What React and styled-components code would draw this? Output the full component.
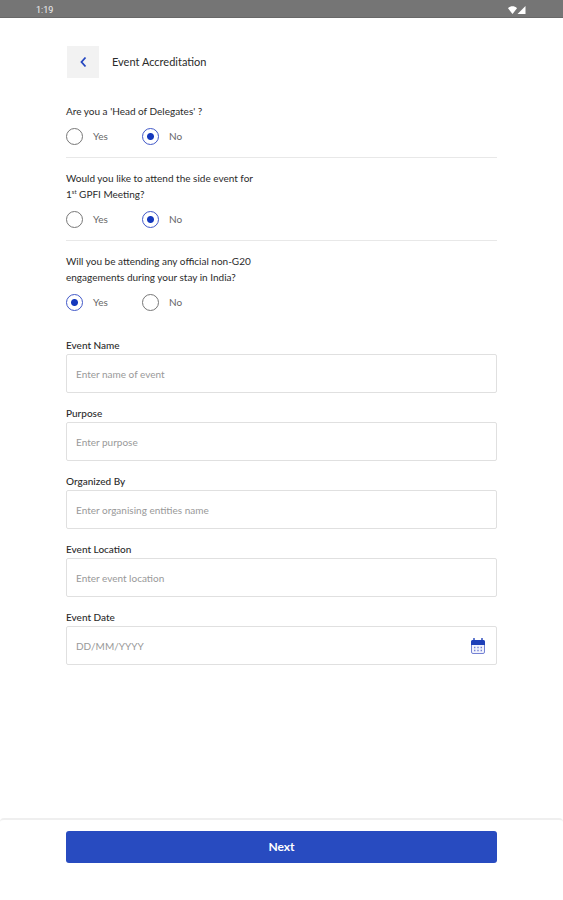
import { useState } from "react";
import styled, { createGlobalStyle } from "styled-components";

const questions = [
  { id: "head", text: "Are you a 'Head of Delegates' ?", answer: "No" },
  {
    id: "side",
    text: (
      <>
        Would you like to attend the side event for 1<sup>st</sup> GPFI Meeting?
      </>
    ),
    answer: "No",
  },
  {
    id: "official",
    text: "Will you be attending any official non-G20 engagements during your stay in India?",
    answer: "Yes",
  },
];

const fields = [
  { id: "name", label: "Event Name", placeholder: "Enter name of event" },
  { id: "purpose", label: "Purpose", placeholder: "Enter purpose" },
  { id: "organizer", label: "Organized By", placeholder: "Enter organising entities name" },
  { id: "location", label: "Event Location", placeholder: "Enter event location" },
  { id: "date", label: "Event Date", placeholder: "DD/MM/YYYY", calendar: true },
];

function StatusIcons() {
  return (
    <svg width="18" height="8" viewBox="0 0 18 8" fill="#fff" aria-hidden="true">
      <path d="M0 2.2C2.6-.4 6.4-.4 9 2.2L4.5 8Z" />
      <path d="M17.5 0V8H9.5Z" />
    </svg>
  );
}

function CalendarIcon() {
  return (
    <svg width="14" height="16" viewBox="0 0 14 16" aria-hidden="true">
      <rect x="0.5" y="2.5" width="13" height="13" rx="1.5" fill="#f1f2fc" stroke="#7482d4" />
      <path d="M0 7V3.5Q0 2 1.5 2h11Q14 2 14 3.5V7Z" fill="#1d3fb8" />
      <path d="M3 0.5v3M11 0.5v3" stroke="#1d3fb8" strokeWidth="1.4" strokeLinecap="round" />
      <path
        d="M3 9.5h1.4M6.3 9.5h1.4M9.6 9.5h1.4M3 12.5h1.4M6.3 12.5h1.4M9.6 12.5h1.4"
        stroke="#7482d4"
        strokeWidth="1.4"
      />
    </svg>
  );
}

function Question({ id, text, answer }) {
  const [value, setValue] = useState(answer);
  return (
    <QuestionBox>
      <QuestionText>{text}</QuestionText>
      <Options>
        {["Yes", "No"].map((option) => (
          <Option key={option}>
            <Radio
              type="radio"
              name={id}
              checked={value === option}
              onChange={() => setValue(option)}
            />
            {option}
          </Option>
        ))}
      </Options>
    </QuestionBox>
  );
}

function App() {
  return (
    <>
      <GlobalStyle />
      <Page>
        <StatusBar>
          <span>1:19</span>
          <StatusIcons />
        </StatusBar>
        <Content>
          <Header>
            <BackButton type="button" aria-label="Back">
              <svg width="8" height="12" viewBox="0 0 8 12" fill="none" aria-hidden="true">
                <path d="M6.5 1.5 2.5 6l4 4.5" stroke="#2446c0" strokeWidth="1.8" />
              </svg>
            </BackButton>
            <Title>Event Accreditation</Title>
          </Header>
          {questions.map((question) => (
            <Question key={question.id} {...question} />
          ))}
          <Fields>
            {fields.map((field) => (
              <Field key={field.id}>
                <Label htmlFor={field.id}>{field.label}</Label>
                <InputBox>
                  <Input id={field.id} type="text" placeholder={field.placeholder} />
                  {field.calendar && (
                    <IconButton type="button" aria-label="Choose date">
                      <CalendarIcon />
                    </IconButton>
                  )}
                </InputBox>
              </Field>
            ))}
          </Fields>
        </Content>
        <Footer>
          <NextButton type="button">Next</NextButton>
        </Footer>
      </Page>
    </>
  );
}
export default App;

const GlobalStyle = createGlobalStyle`
  * {
    box-sizing: border-box;
  }

  body {
    margin: 0;
    background: #fff;
    color: #2b2b2b;
    font-family: Lato, sans-serif;
    font-size: 10px;
    line-height: 16px;
  }

  button, input {
    font: inherit;
  }
`;

const Page = styled.div`
  display: flex;
  flex-direction: column;
  min-height: 100vh;
`;

const StatusBar = styled.div`
  display: flex;
  align-items: center;
  justify-content: space-between;
  height: 18px;
  padding: 2px 37px 0 36px;
  background: #757575;
  border-bottom: 1px solid #686868;
  color: #eee;
  font-family: Roboto, sans-serif;
  font-size: 9px;
`;

const Content = styled.main`
  flex: 1;
  padding: 28px 66px 24px;
`;

const Header = styled.header`
  display: flex;
  align-items: center;
  gap: 13px;
  margin-bottom: 25px;
  padding-left: 1px;
`;

const BackButton = styled.button`
  display: flex;
  align-items: center;
  justify-content: center;
  width: 32px;
  height: 32px;
  padding: 0;
  border: none;
  background: #f2f2f2;
  cursor: pointer;
`;

const Title = styled.h1`
  margin: 0;
  font-size: 11px;
  font-weight: 400;
`;

const QuestionBox = styled.fieldset`
  min-width: 0;
  margin: 0;
  padding: 0;
  border: none;

  &:not(:last-of-type) {
    margin-bottom: 12px;
    padding-bottom: 12px;
    border-bottom: 1px solid #e8e8e8;
  }
`;

const QuestionText = styled.legend`
  max-width: 190px;
  margin-bottom: 8px;
  padding: 0;

  sup {
    font-size: 6px;
    line-height: 0;
  }
`;

const Options = styled.div`
  display: flex;
`;

const Option = styled.label`
  display: flex;
  align-items: center;
  gap: 10px;
  width: 76px;
  height: 18px;
  color: #666;
`;

const Radio = styled.input`
  appearance: none;
  width: 17px;
  height: 17px;
  margin: 0;
  border: 1px solid #777;
  border-radius: 50%;

  &:checked {
    border-color: #4158c8;
    background: radial-gradient(circle, #1438bd 3px, #fff 4px);
  }
`;

const Fields = styled.div`
  display: flex;
  flex-direction: column;
  gap: 12px;
  margin-top: 26px;
`;

const Field = styled.div`
  display: flex;
  flex-direction: column;
  gap: 1px;
`;

const Label = styled.label`
  font-weight: 500;
`;

const InputBox = styled.div`
  display: flex;
  align-items: center;
  height: 39px;
  padding: 0 11px 0 9px;
  border: 1px solid #e0e0e0;
  border-radius: 2px;
`;

const Input = styled.input`
  flex: 1;
  min-width: 0;
  padding: 0;
  border: none;
  outline: none;
  background: none;
  color: #2b2b2b;

  &::placeholder {
    color: #999;
  }
`;

const IconButton = styled.button`
  display: flex;
  padding: 0;
  border: none;
  background: none;
  cursor: pointer;
`;

const Footer = styled.footer`
  padding: 11px 66px 37px;
  border-top: 2px solid #efefef;
  border-radius: 4px 4px 0 0;
`;

const NextButton = styled.button`
  display: block;
  width: 100%;
  height: 32px;
  padding: 0;
  border: none;
  border-radius: 3px;
  background: #284bc0;
  color: #fff;
  font-size: 12px;
  font-weight: 700;
  cursor: pointer;
`;
